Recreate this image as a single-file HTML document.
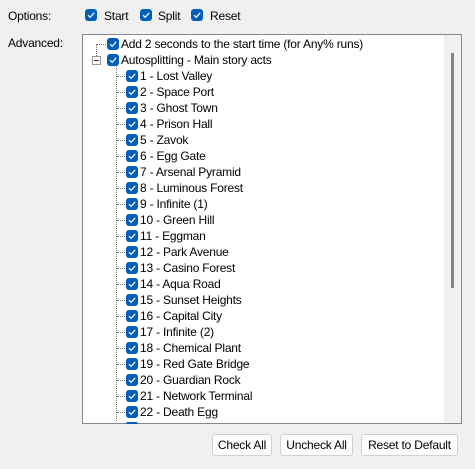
<!DOCTYPE html><html><head><style>
body{margin:0;width:475px;height:469px;background:#f0f0f0;font-family:"Liberation Sans",sans-serif;font-size:12px;color:#000;position:relative;overflow:hidden}
.a{position:absolute;white-space:nowrap;letter-spacing:-0.2px}
.cb{position:absolute;width:12px;height:12px;background:#005fb8;border-radius:3px}
.cb svg{position:absolute;left:0;top:0}
.box{position:absolute;left:82px;top:34px;width:378px;height:388px;background:#fff;border:1px solid #828790}
.sb{position:absolute;left:361px;top:0;width:17px;height:388px;background:#f0f0f0}
.th{position:absolute;left:7px;top:18px;width:3px;height:235px;background:#858585}
.btn{position:absolute;top:434px;height:20px;border:1px solid #d0d0d0;border-radius:3px;background:#fdfdfd;text-align:center;line-height:20px;letter-spacing:-0.2px}
.hd{position:absolute;border-top:1px dotted #777;height:0}
.vd{position:absolute;border-left:1px dotted #777;width:0}
</style></head><body>
<div class="a" style="left:8px;top:9px">Options:</div>
<div class="a" style="left:8px;top:36px">Advanced:</div>
<div class="cb" style="left:85px;top:9px"><svg width="12" height="12"><path d="M3 6.2L5.2 8.3L9.2 3.8" stroke="#fff" stroke-width="1.2" fill="none"/></svg></div>
<div class="a" style="left:104px;top:9px">Start</div>
<div class="cb" style="left:140px;top:9px"><svg width="12" height="12"><path d="M3 6.2L5.2 8.3L9.2 3.8" stroke="#fff" stroke-width="1.2" fill="none"/></svg></div>
<div class="a" style="left:158px;top:9px">Split</div>
<div class="cb" style="left:191px;top:9px"><svg width="12" height="12"><path d="M3 6.2L5.2 8.3L9.2 3.8" stroke="#fff" stroke-width="1.2" fill="none"/></svg></div>
<div class="a" style="left:210px;top:9px">Reset</div>
<div class="box"><div class="sb"><div class="th"></div></div></div>
<div class="vd" style="left:96px;top:44px;height:14px"></div>
<div class="vd" style="left:116px;top:66px;height:355px"></div>
<div class="hd" style="left:96px;top:44px;width:10px"></div>
<div style="position:absolute;left:92px;top:56px;width:7px;height:7px;border:1px solid #999;background:#fff"><div style="position:absolute;left:1px;top:3px;width:5px;height:1px;background:#333"></div></div>
<div id="rows"></div>
<div class="btn" style="left:212px;width:58px">Check All</div>
<div class="btn" style="left:280px;width:71px">Uncheck All</div>
<div class="btn" style="left:361px;width:95px">Reset to Default</div>
<script>
var items=["Add 2 seconds to the start time (for Any% runs)","Autosplitting - Main story acts","1 - Lost Valley","2 - Space Port","3 - Ghost Town","4 - Prison Hall","5 - Zavok","6 - Egg Gate","7 - Arsenal Pyramid","8 - Luminous Forest","9 - Infinite (1)","10 - Green Hill","11 - Eggman","12 - Park Avenue","13 - Casino Forest","14 - Aqua Road","15 - Sunset Heights","16 - Capital City","17 - Infinite (2)","18 - Chemical Plant","19 - Red Gate Bridge","20 - Guardian Rock","21 - Network Terminal","22 - Death Egg",""];
var h="",ck='<svg width="12" height="12"><path d="M3 6.2L5.2 8.3L9.2 3.8" stroke="#fff" stroke-width="1.2" fill="none"/></svg>';
items.forEach(function(t,i){var y=38+i*16;var c=i<2?107:126,tx=i<2?121:140;
if(i>=2&&i<24)h+='<div class="hd" style="left:117px;top:'+(y+6)+'px;width:8px"></div>';
if(i<24)h+='<div class="cb" style="left:'+c+'px;top:'+y+'px">'+ck+'</div><div class="a" style="left:'+tx+'px;top:'+(y-1)+'px">'+t+'</div>';
else h+='<div class="cb" style="left:126px;top:'+y+'px;height:2px;border-radius:3px 3px 0 0"></div>';});
document.getElementById("rows").innerHTML=h;
</script>
</body></html>
